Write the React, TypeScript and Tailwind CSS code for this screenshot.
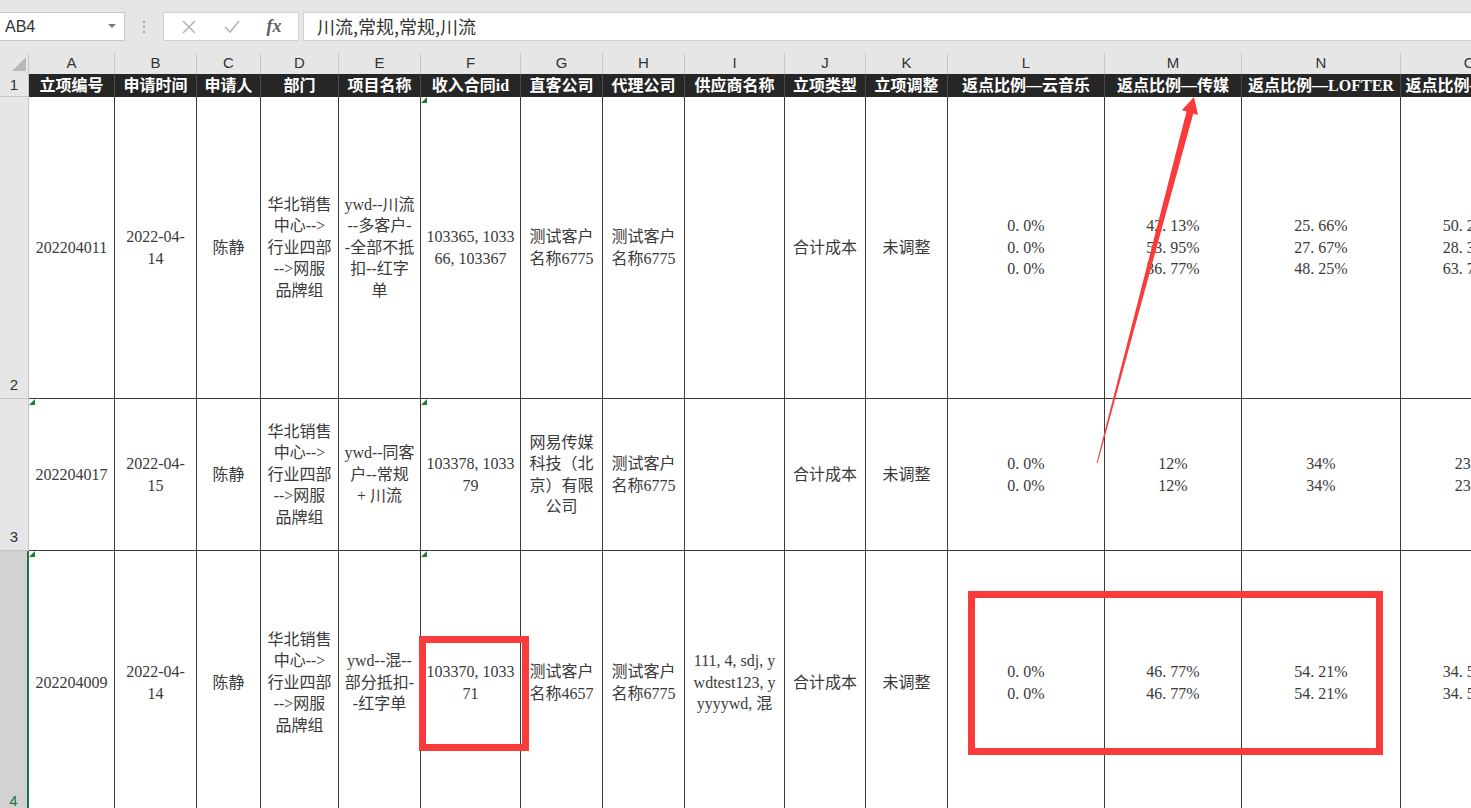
import React from 'react';

type CellData = { lines: string[]; tri?: boolean };

const D = ['华北销售', '中心-->', '行业四部', '-->网服', '品牌组'];

const headers = [
  '立项编号',
  '申请时间',
  '申请人',
  '部门',
  '项目名称',
  '收入合同id',
  '直客公司',
  '代理公司',
  '供应商名称',
  '立项类型',
  '立项调整',
  '返点比例—云音乐',
  '返点比例—传媒',
  '返点比例—LOFTER',
  '返点比例—LOOK',
];

const letters = ['A', 'B', 'C', 'D', 'E', 'F', 'G', 'H', 'I', 'J', 'K', 'L', 'M', 'N', 'O'];

const rows: { num: string; selected?: boolean; cells: CellData[] }[] = [
  {
    num: '2',
    cells: [
      { lines: ['202204011'] },
      { lines: ['2022-04-', '14'] },
      { lines: ['陈静'] },
      { lines: D },
      { lines: ['ywd--川流', '--多客户-', '-全部不抵', '扣--红字', '单'] },
      { lines: ['103365, 1033', '66, 103367'], tri: true },
      { lines: ['测试客户', '名称6775'] },
      { lines: ['测试客户', '名称6775'] },
      { lines: [] },
      { lines: ['合计成本'] },
      { lines: ['未调整'] },
      { lines: ['0. 0%', '0. 0%', '0. 0%'] },
      { lines: ['42. 13%', '53. 95%', '36. 77%'] },
      { lines: ['25. 66%', '27. 67%', '48. 25%'] },
      { lines: ['50. 21%', '28. 38%', '63. 77%'] },
    ],
  },
  {
    num: '3',
    cells: [
      { lines: ['202204017'], tri: true },
      { lines: ['2022-04-', '15'] },
      { lines: ['陈静'] },
      { lines: D },
      { lines: ['ywd--同客', '户--常规', '+ 川流'] },
      { lines: ['103378, 1033', '79'], tri: true },
      { lines: ['网易传媒', '科技（北', '京）有限', '公司'] },
      { lines: ['测试客户', '名称6775'] },
      { lines: [] },
      { lines: ['合计成本'] },
      { lines: ['未调整'] },
      { lines: ['0. 0%', '0. 0%'] },
      { lines: ['12%', '12%'] },
      { lines: ['34%', '34%'] },
      { lines: ['23%', '23%'] },
    ],
  },
  {
    num: '4',
    selected: true,
    cells: [
      { lines: ['202204009'], tri: true },
      { lines: ['2022-04-', '14'] },
      { lines: ['陈静'] },
      { lines: D },
      { lines: ['ywd--混--', '部分抵扣-', '-红字单'] },
      { lines: ['103370, 1033', '71'], tri: true },
      { lines: ['测试客户', '名称4657'] },
      { lines: ['测试客户', '名称6775'] },
      { lines: ['111, 4, sdj, y', 'wdtest123, y', 'yyyywd, 混'] },
      { lines: ['合计成本'] },
      { lines: ['未调整'] },
      { lines: ['0. 0%', '0. 0%'] },
      { lines: ['46. 77%', '46. 77%'] },
      { lines: ['54. 21%', '54. 21%'] },
      { lines: ['34. 52%', '34. 52%'] },
    ],
  },
];

function FormulaBar() {
  return (
    <div className="flex h-[53px] items-start bg-[#e6e6e6] pt-[12px]">
      <div className="flex h-[29px] w-[125px] items-center justify-between border border-l-0 border-[#c6c6c6] bg-white pl-[5px] pr-[8px] font-['Liberation_Sans',sans-serif] text-[16px] text-[#333]">
        <span>AB4</span>
        <svg width="8" height="5" viewBox="0 0 8 5">
          <path d="M0 0 L8 0 L4 4 Z" fill="#7a7a7a" />
        </svg>
      </div>
      <div className="flex h-[29px] w-[38px] items-center justify-center">
        <svg width="4" height="14" viewBox="0 0 4 14">
          <circle cx="2" cy="2" r="1.2" fill="#a6a6a6" />
          <circle cx="2" cy="7" r="1.2" fill="#a6a6a6" />
          <circle cx="2" cy="12" r="1.2" fill="#a6a6a6" />
        </svg>
      </div>
      <div className="flex h-[29px] w-[136px] items-center border border-[#d0d0d0] bg-white">
        <div className="flex w-[50px] justify-center">
          <svg width="14" height="14" viewBox="0 0 14 14">
            <path d="M1 1 L13 13 M13 1 L1 13" stroke="#b3b3b3" strokeWidth="1.5" />
          </svg>
        </div>
        <div className="flex w-[36px] justify-center">
          <svg width="16" height="13" viewBox="0 0 16 13">
            <path d="M1 7 L6 12 L15 1" stroke="#b3b3b3" strokeWidth="1.6" fill="none" />
          </svg>
        </div>
        <div className="flex w-[48px] justify-center font-['Liberation_Serif',serif] text-[18px] italic font-bold text-[#606060]">
          fx
        </div>
      </div>
      <div className="ml-[4px] flex h-[29px] flex-1 items-center border border-r-0 border-[#d0d0d0] bg-white pl-[13px] font-['Noto_Sans_CJK_SC',sans-serif] text-[18px] text-[#333]">
        川流,常规,常规,川流
      </div>
    </div>
  );
}

function Triangle() {
  return (
    <span className="absolute left-0 top-0 h-0 w-0 border-l-[6px] border-t-[6px] border-l-transparent border-t-[#1f7a35] rotate-90" />
  );
}

function Sheet() {
  return (
    <div className="grid w-max grid-cols-[29px_86px_82px_64px_78px_82px_100px_82px_82px_100px_81px_82px_157px_137px_159px_138px] grid-rows-[21px_23px_302px_152px_264px] font-['Liberation_Serif','Noto_Sans_CJK_SC',serif]">
      {/* column letters */}
      <div className="flex items-end justify-end border-r border-[#c6c6c6] bg-[#e6e6e6] pb-[3px] pr-[2px]">
        <svg width="14" height="14" viewBox="0 0 14 14">
          <path d="M14 0 L14 14 L0 14 Z" fill="#b9b9b9" />
        </svg>
      </div>
      {letters.map((l) => (
        <div
          key={l}
          className="flex items-center justify-center border-r border-[#c6c6c6] bg-[#e6e6e6] font-['Liberation_Sans',sans-serif] text-[15px] text-[#333]"
        >
          {l}
        </div>
      ))}

      {/* header row 1 */}
      <div className="flex items-center justify-center border-r border-b border-[#c6c6c6] bg-[#e6e6e6] font-['Liberation_Sans',sans-serif] text-[15px] text-[#333]">
        1
      </div>
      {headers.map((h) => (
        <div
          key={h}
          className="flex items-center justify-center overflow-hidden whitespace-nowrap border-r border-[#4a4a4a] bg-[#262626] text-[16px] font-bold text-white"
        >
          {h}
        </div>
      ))}

      {rows.map((r) => (
        <React.Fragment key={r.num}>
          <div
            className={
              r.selected
                ? 'flex items-end justify-center border-b border-r-2 border-b-[#c6c6c6] border-r-[#217346] bg-[#d2d2d2] pb-[2px] font-[\'Liberation_Sans\',sans-serif] text-[15px] text-[#217346]'
                : 'flex items-end justify-center border-r border-b border-[#c6c6c6] bg-[#e6e6e6] pb-[2px] font-[\'Liberation_Sans\',sans-serif] text-[15px] text-[#333]'
            }
          >
            {r.num}
          </div>
          {r.cells.map((c, i) => (
            <div
              key={i}
              className="relative flex items-center justify-center overflow-hidden whitespace-pre border-r border-b border-[#3a3a3a] text-center text-[16px] leading-[21.5px] text-[#3a3a3a]"
            >
              {c.tri && <Triangle />}
              <div>
                {c.lines.map((ln, j) => (
                  <div key={j}>{ln}</div>
                ))}
              </div>
            </div>
          ))}
        </React.Fragment>
      ))}
    </div>
  );
}

export default function App() {
  return (
    <div className="relative h-[808px] w-[1471px] overflow-hidden bg-white">
      <FormulaBar />
      <Sheet />

      {/* annotations */}
      <div className="pointer-events-none absolute left-[419px] top-[636px] h-[115px] w-[110px] border-[7px] border-[#f93b3b]" />
      <div className="pointer-events-none absolute left-[968px] top-[591px] h-[164px] w-[415px] border-[7px] border-[#f93b3b]" />
      <svg
        className="pointer-events-none absolute left-0 top-0"
        width="1471"
        height="808"
        viewBox="0 0 1471 808"
      >
        <polygon
          points="1194,97 1198,115 1193.3,113.4 1097.6,463.1 1096.6,462.9 1186.5,111.6 1181.8,110.3"
          fill="#f93b3b"
        />
      </svg>
    </div>
  );
}
